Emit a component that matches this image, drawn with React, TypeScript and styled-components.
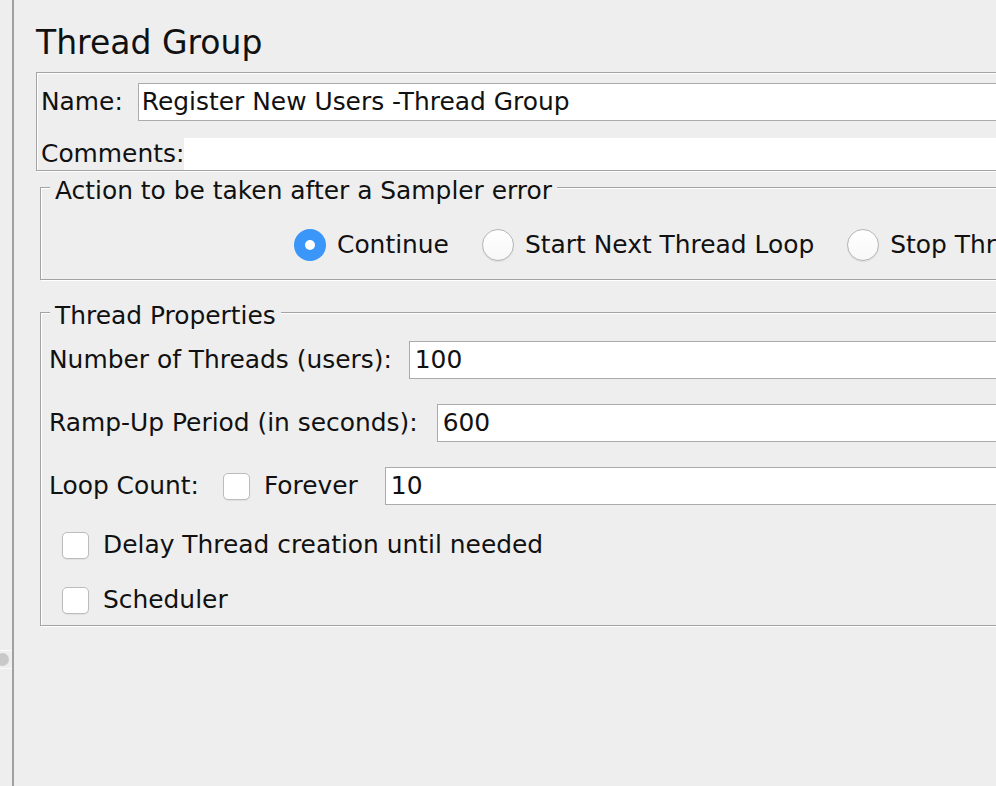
import React from 'react';
import styled, { createGlobalStyle, css } from 'styled-components';

const GlobalStyle = createGlobalStyle`
  html, body {
    margin: 0;
    padding: 0;
    background: #eeeeee;
    overflow: hidden;
  }
  body {
    font-family: "DejaVu Sans", "Liberation Sans", sans-serif;
    color: #111;
  }
`;

const FONT = 24.9;

const Page = styled.div`
  display: flex;
  width: 996px;
  height: 786px;
  overflow: hidden;
  background: #eeeeee;
`;

const SideStrip = styled.div`
  position: relative;
  flex: 0 0 12px;
  border-right: 2px solid #a0a0a0;
`;

const DividerKnob = styled.div`
  position: absolute;
  left: 0;
  top: 650px;
  width: 12px;
  height: 19px;
  border-top: 1px solid #fafafa;
  border-bottom: 1px solid #fafafa;
  box-sizing: border-box;

  &::after {
    content: '';
    position: absolute;
    left: -4px;
    top: 2px;
    width: 13px;
    height: 13px;
    border-radius: 50%;
    background: #c9c9c9;
  }
`;

const Main = styled.div`
  flex: 1;
  min-width: 0;
  overflow: hidden;
  padding: 23px 0 0 22px;
`;

const Content = styled.div`
  width: 1280px;
  display: flex;
  flex-direction: column;
`;

const Title = styled.h1`
  margin: 0 0 9px;
  font-size: 33px;
  font-weight: normal;
  line-height: 40px;
  color: #111;
`;

const etched = css`
  border: 1px solid #a3a3a3;
  box-shadow: inset 1px 1px 0 #ffffff, 1px 1px 0 #ffffff;
`;

const NamePanel = styled.div`
  ${etched};
  display: flex;
  flex-direction: column;
  padding: 10px 0 0 4px;
`;

const Row = styled.div<{ $gap?: number; $height?: number; $mt?: number }>`
  display: flex;
  align-items: center;
  gap: ${(p) => p.$gap ?? 0}px;
  height: ${(p) => p.$height ?? 38}px;
  margin-top: ${(p) => p.$mt ?? 0}px;
`;

const Label = styled.span<{ $ml?: number }>`
  margin-left: ${(p) => p.$ml ?? 0}px;
  font-size: ${FONT}px;
  line-height: 28px;
  white-space: nowrap;
`;

const TextField = styled.div<{ $ml?: number }>`
  flex: 1;
  align-self: stretch;
  margin-left: ${(p) => p.$ml ?? 0}px;
  background: #ffffff;
  border: 1px solid #ababab;
  border-right: none;
  padding-left: 5px;
  font-size: ${FONT}px;
  line-height: 36px;
  white-space: nowrap;
`;

const NameField = styled(TextField)`
  padding-left: 3px;
`;

const CommentsArea = styled.div`
  flex: 1;
  align-self: stretch;
  background: #ffffff;
`;

const Group = styled.div<{ $mt: number }>`
  ${etched};
  position: relative;
  margin: ${(p) => p.$mt}px 0 0 4px;
`;

const Legend = styled.span`
  position: absolute;
  top: -11px;
  left: 9px;
  padding: 0 5px;
  background: #eeeeee;
  font-size: ${FONT}px;
  line-height: 28px;
  white-space: nowrap;
`;

const RadioRow = styled.div`
  display: flex;
  align-items: center;
  gap: 33px;
  height: 32px;
  padding: 41px 0 18px 253px;
`;

const Choice = styled.label`
  display: flex;
  align-items: center;
  gap: 11px;
  font-size: ${FONT}px;
  line-height: 28px;
  white-space: nowrap;
`;

const Radio = styled.span<{ $checked?: boolean }>`
  position: relative;
  flex: 0 0 32px;
  width: 32px;
  height: 32px;
  box-sizing: border-box;
  border-radius: 50%;
  ${(p) =>
    p.$checked
      ? css`
          background: #3a96f9;
          &::after {
            content: '';
            position: absolute;
            left: 11px;
            top: 11px;
            width: 10px;
            height: 10px;
            border-radius: 50%;
            background: #ffffff;
          }
        `
      : css`
          background: linear-gradient(#ffffff, #f7f7f7);
          border: 1px solid #b5b5b5;
          box-shadow: 0 1px 1px rgba(0, 0, 0, 0.08);
        `}
`;

const Check = styled.span<{ $ml?: number }>`
  flex: 0 0 27px;
  width: 27px;
  height: 27px;
  box-sizing: border-box;
  margin-left: ${(p) => p.$ml ?? 0}px;
  border-radius: 5px;
  background: #ffffff;
  border: 1px solid #bcbcbc;
  box-shadow: 0 1px 1px rgba(0, 0, 0, 0.06);
`;

const PropsBody = styled.div`
  display: flex;
  flex-direction: column;
  gap: 25px;
  padding: 28px 0 10px 8px;
`;

export default function App() {
  return (
    <>
      <GlobalStyle />
      <Page>
        <SideStrip>
          <DividerKnob />
        </SideStrip>
        <Main>
          <Content>
            <Title>Thread Group</Title>

            <NamePanel>
              <Row $gap={15}>
                <Label>Name:</Label>
                <NameField>Register New Users -Thread Group</NameField>
              </Row>
              <Row $height={32} $mt={17}>
                <Label>Comments:</Label>
                <CommentsArea />
              </Row>
            </NamePanel>

            <Group $mt={16}>
              <Legend>Action to be taken after a Sampler error</Legend>
              <RadioRow>
                <Choice>
                  <Radio $checked />
                  Continue
                </Choice>
                <Choice>
                  <Radio />
                  Start Next Thread Loop
                </Choice>
                <Choice>
                  <Radio />
                  Stop Thread
                </Choice>
              </RadioRow>
            </Group>

            <Group $mt={32}>
              <Legend>Thread Properties</Legend>
              <PropsBody>
                <Row>
                  <Label>Number of Threads (users):</Label>
                  <TextField $ml={17}>100</TextField>
                </Row>
                <Row>
                  <Label>Ramp-Up Period (in seconds):</Label>
                  <TextField $ml={19}>600</TextField>
                </Row>
                <Row>
                  <Label>Loop Count:</Label>
                  <Check $ml={24} />
                  <Label $ml={14}>Forever</Label>
                  <TextField $ml={27}>10</TextField>
                </Row>
                <Row $height={30} $gap={14}>
                  <Check $ml={13} />
                  <Label>Delay Thread creation until needed</Label>
                </Row>
                <Row $height={30} $gap={14}>
                  <Check $ml={13} />
                  <Label>Scheduler</Label>
                </Row>
              </PropsBody>
            </Group>
          </Content>
        </Main>
      </Page>
    </>
  );
}
